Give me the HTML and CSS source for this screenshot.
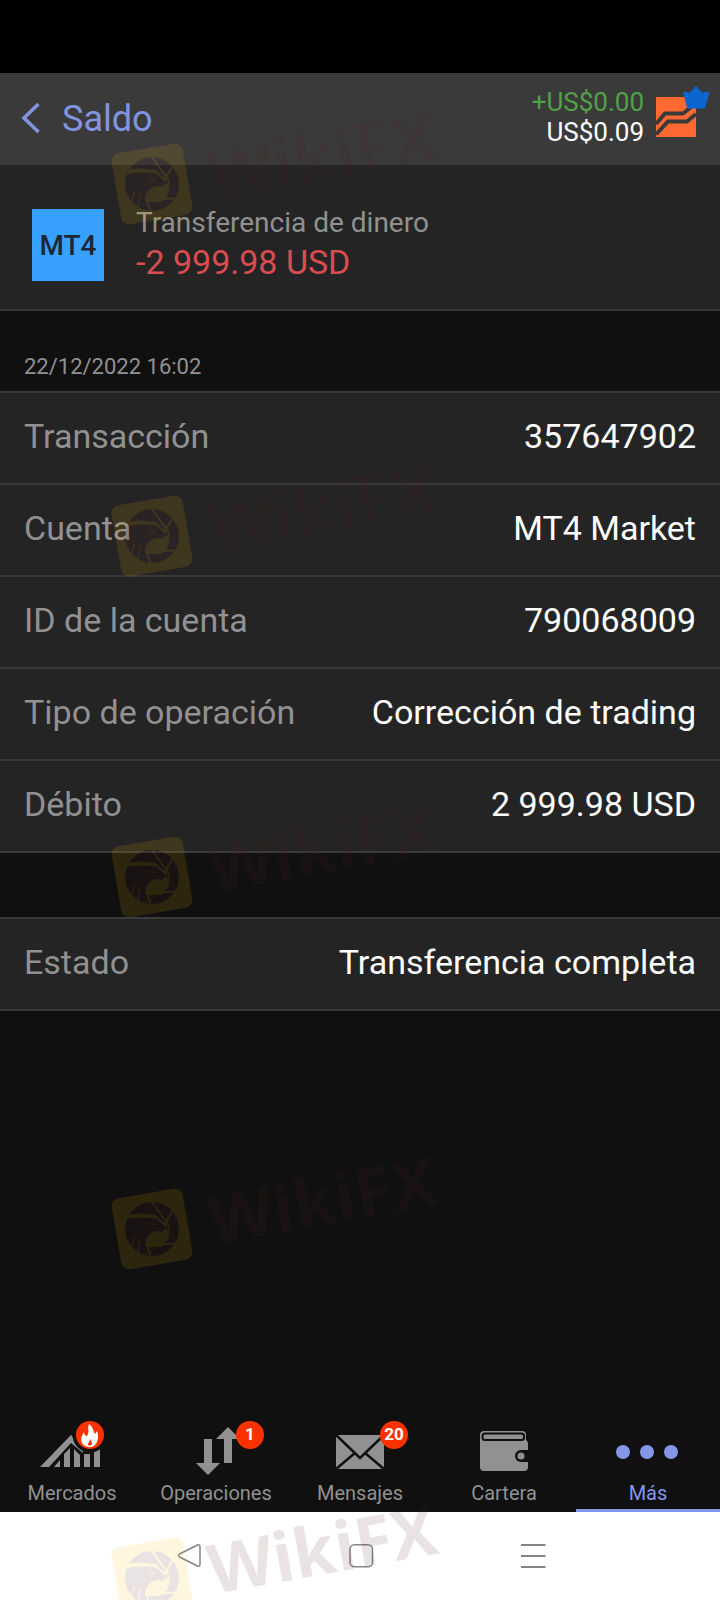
FILE: index.html
```html
<!DOCTYPE html>
<html lang="es">
<head>
<meta charset="utf-8">
<title>Saldo</title>
<link rel="stylesheet" href="styles.css">
</head>
<body>
<div class="screen">
  <div class="status"></div>
  <header class="header">
    <svg class="back" width="20" height="32" viewBox="0 0 20 32"><path d="M18.500 2 4 16 18.500 30" fill="none" stroke="#8294e0" stroke-width="3.600"/></svg>
    <h1 class="title">Saldo</h1>
    <div class="totals"><span class="gain">+US$0.00</span><span>US$0.09</span></div>
    <svg class="brand" width="56" height="56" viewBox="0 0 56 56">
      <path d="M0 14H40V54H0Z" fill="#ff6830"/>
      <path d="M0 41 9 30.500H27L40 20" fill="none" stroke="#3a3a3a" stroke-width="4"/>
      <path d="M0 51.500 12 38.500H31L40 31" fill="none" stroke="#3a3a3a" stroke-width="4"/>
      <path d="M27.500 9 34.500 10 40 3 45.500 10 53 9 48.500 25H31.500Z" fill="#0b66cf" stroke="#0b66cf" stroke-linejoin="round"/>
    </svg>
  </header>
  <section class="summary">
    <div class="badge">MT4</div>
    <div class="sumtext"><span class="kind">Transferencia de dinero</span><span class="amount">-2 999.98 USD</span></div>
  </section>
  <div class="date">22/12/2022 16:02</div>
  <div class="rows">
    <div class="row"><span class="label">Transacción</span><span>357647902</span></div>
    <div class="row"><span class="label">Cuenta</span><span>MT4 Market</span></div>
    <div class="row"><span class="label">ID de la cuenta</span><span>790068009</span></div>
    <div class="row"><span class="label">Tipo de operación</span><span>Corrección de trading</span></div>
    <div class="row"><span class="label">Débito</span><span>2 999.98 USD</span></div>
  </div>
  <div class="rows state">
    <div class="row"><span class="label">Estado</span><span>Transferencia completa</span></div>
  </div>
  <nav class="tabs">
    <div class="tab">
      <svg width="144" height="70" viewBox="0 0 144 70">
        <path d="M40 52 71 20 83 33V38L71 28 49 52Z" fill="#919191"/>
        <path d="M54 52 60 45V52ZM64 52V39L70 33V52ZM74 52V34L80 40V52ZM84 52V39H90V52ZM94 52V37L100 34V52Z" fill="#919191"/>
        <circle cx="90" cy="20" r="17.500" fill="#101010"/><circle cx="90" cy="20" r="14" fill="#fa3200"/>
        <path d="M89 9C94 13 93 16 95 19L97 16C99 21 98 27 95 30C91 34 84 32 82 28C80 24 82 21 84 17C84 19 85 21 87 21C90 17 87 13 89 9ZM90 24C90 27 88 27 88 30C89 31 91 31 92 29C92 27 91 26 90 24Z" fill="#fff" fill-rule="evenodd"/>
      </svg><span>Mercados</span>
    </div>
    <div class="tab">
      <svg width="144" height="70" viewBox="0 0 144 70">
        <path d="M60 24H68V48H76L64 60 52 48H60ZM80 48V24H72L84 12 96 24H88V48Z" fill="#919191"/>
        <circle cx="106" cy="20" r="14" fill="#fa3200"/><text class="count" x="106" y="25">1</text>
      </svg><span>Operaciones</span>
    </div>
    <div class="tab">
      <svg width="144" height="70" viewBox="0 0 144 70">
        <path d="M48 20H96V54H48Z" fill="#919191"/><path d="M48 20 72 43 96 20M48 54 67 38M96 54 77 38" fill="none" stroke="#101010" stroke-width="2.500"/>
        <circle cx="106" cy="20" r="14" fill="#fa3200"/><text class="count" x="106" y="25">20</text>
      </svg><span>Mensajes</span>
    </div>
    <div class="tab">
      <svg width="144" height="70" viewBox="0 0 144 70">
        <path d="M52 16H90Q94 16 94 20V25Q96 26 96 29V52Q96 56 92 56H52Q48 56 48 52V20Q48 16 52 16Z" fill="#919191"/>
        <rect x="50.500" y="18.500" width="41.500" height="6.500" rx="2.500" fill="#919191" stroke="#101010" stroke-width="2"/>
        <path d="M96 35H89A6 6 0 0 0 89 47H96Z" fill="#101010"/><circle cx="89" cy="41" r="3.500" fill="#919191"/>
      </svg><span>Cartera</span>
    </div>
    <div class="tab active">
      <svg width="144" height="70" viewBox="0 0 144 70" fill="#8496e8"><circle cx="47" cy="37" r="7"/><circle cx="71" cy="37" r="7"/><circle cx="95" cy="37" r="7"/></svg><span>Más</span>
    </div>
  </nav>
  <div class="sysnav">
    <svg width="720" height="88" viewBox="0 0 720 88" fill="none" stroke="#858585" stroke-width="1.500">
      <path d="M197.500 33Q200 32 200 35V52Q200 55 197.500 54L179.500 45Q177.500 43.500 179.500 42Z"/>
      <rect x="350" y="32.800" width="22.500" height="22" rx="4.500"/>
      <path d="M521 33H545.500M521 44H545.500M521 55H545.500" stroke-width="2"/>
    </svg>
  </div>
  <svg class="watermark" width="720" height="1600" viewBox="0 0 720 1600">
    <defs>
      <g id="mark">
        <rect x="-36" y="-36" width="72" height="72" rx="8" fill="#ffb800" transform="rotate(-9.700)"/>
        <circle r="27" fill="#502020"/>
        <path fill="#ffb800" d="M-2 5Q4 0 10 3L14-1 17 3 15 12 8 18-6 18Q-9 11-2 5Z"/>
        <path fill="#ffb800" d="M-26-14Q-10-17 1-14L7-10Q-8-13-27-10Z"/>
        <path fill="none" stroke="#ffb800" stroke-width="2" d="M2-14 14-3M0-27 17-3M21-19 12-3M17-2 15 11 8 17M26 14-6 17M-6 15-1 28"/>
        <path fill="none" stroke="#ffb800" stroke-width="1.200" d="M-3-5H3M-12 10-14 24M-18 8-20 18"/>
        <text class="wm" x="57" y="27" textLength="231" lengthAdjust="spacingAndGlyphs" transform="rotate(-10.300)">WikiFX</text>
      </g>
    </defs>
    <g opacity=".12"><use href="#mark" x="152" y="184"/></g>
    <g opacity=".12"><use href="#mark" x="152" y="536"/></g>
    <g opacity=".12"><use href="#mark" x="152" y="877"/></g>
    <g opacity=".12"><use href="#mark" x="152" y="1229"/></g>
    <g opacity=".12"><use href="#mark" x="152" y="1578"/></g>
  </svg>
</div>
</body>
</html>
```
FILE: styles.css
```css
* { box-sizing: border-box; }
body { margin: 0; background: #101010; font-family: Roboto, "Liberation Sans", sans-serif; color: #fff; }
.screen { position: relative; width: 720px; height: 1600px; overflow: hidden; display: flex; flex-direction: column; }
.status { height: 73px; background: #000; }
.header { height: 92px; background: #3a3a3a; display: flex; align-items: center; padding: 0 8px 0 20px; }
.back { margin-top: -2px; }
.title { margin: 0 auto 0 22px; font-size: 36px; font-weight: 400; color: #8294e0; }
.totals { display: flex; flex-direction: column; text-align: right; font-size: 26px; line-height: 30px; margin: -5px 12px 0 0; }
.gain { color: #52a048; }
.brand { align-self: flex-start; margin-top: 10px; }
.summary { height: 146px; background: #242424; border-bottom: 2px solid #3a3a3a; display: flex; padding: 44px 32px 0; }
.badge { width: 72px; height: 72px; background: #38a0ff; color: #1c2733; font-size: 28px; font-weight: 500; line-height: 73px; text-align: center; }
.sumtext { display: flex; flex-direction: column; margin-left: 32px; margin-top: -4px; }
.kind { font-size: 28px; line-height: 36px; color: #919191; }
.amount { font-size: 34px; line-height: 42px; color: #d94c50; }
.date { height: 80px; padding: 43px 24px 0; font-size: 22px; line-height: 26px; color: #919191; }
.rows { border-top: 2px solid #3a3a3a; background: #242424; }
.state { margin-top: 64px; }
.row { height: 92px; border-bottom: 2px solid #3a3a3a; padding: 0 24px; display: flex; justify-content: space-between; font-size: 34px; line-height: 86px; }
.label { color: #919191; }
.tabs { margin-top: auto; display: flex; height: 98px; }
.tab { width: 144px; display: flex; flex-direction: column; align-items: center; font-size: 20px; line-height: 20px; color: #919191; padding-top: 1px; }
.tab svg { display: block; flex: none; }
.tab span { margin-top: -2px; }
.active { color: #8496e8; border-bottom: 3px solid #8496e8; }
.count { fill: #fff; font-size: 17px; font-weight: 700; text-anchor: middle; }
.sysnav { height: 88px; background: #fff; }
.sysnav svg { display: block; }
.watermark { position: absolute; left: 0; top: 0; pointer-events: none; }
.wm { font-family: "Open Sans", sans-serif; font-weight: 700; font-size: 68px; fill: #502020; }
```
